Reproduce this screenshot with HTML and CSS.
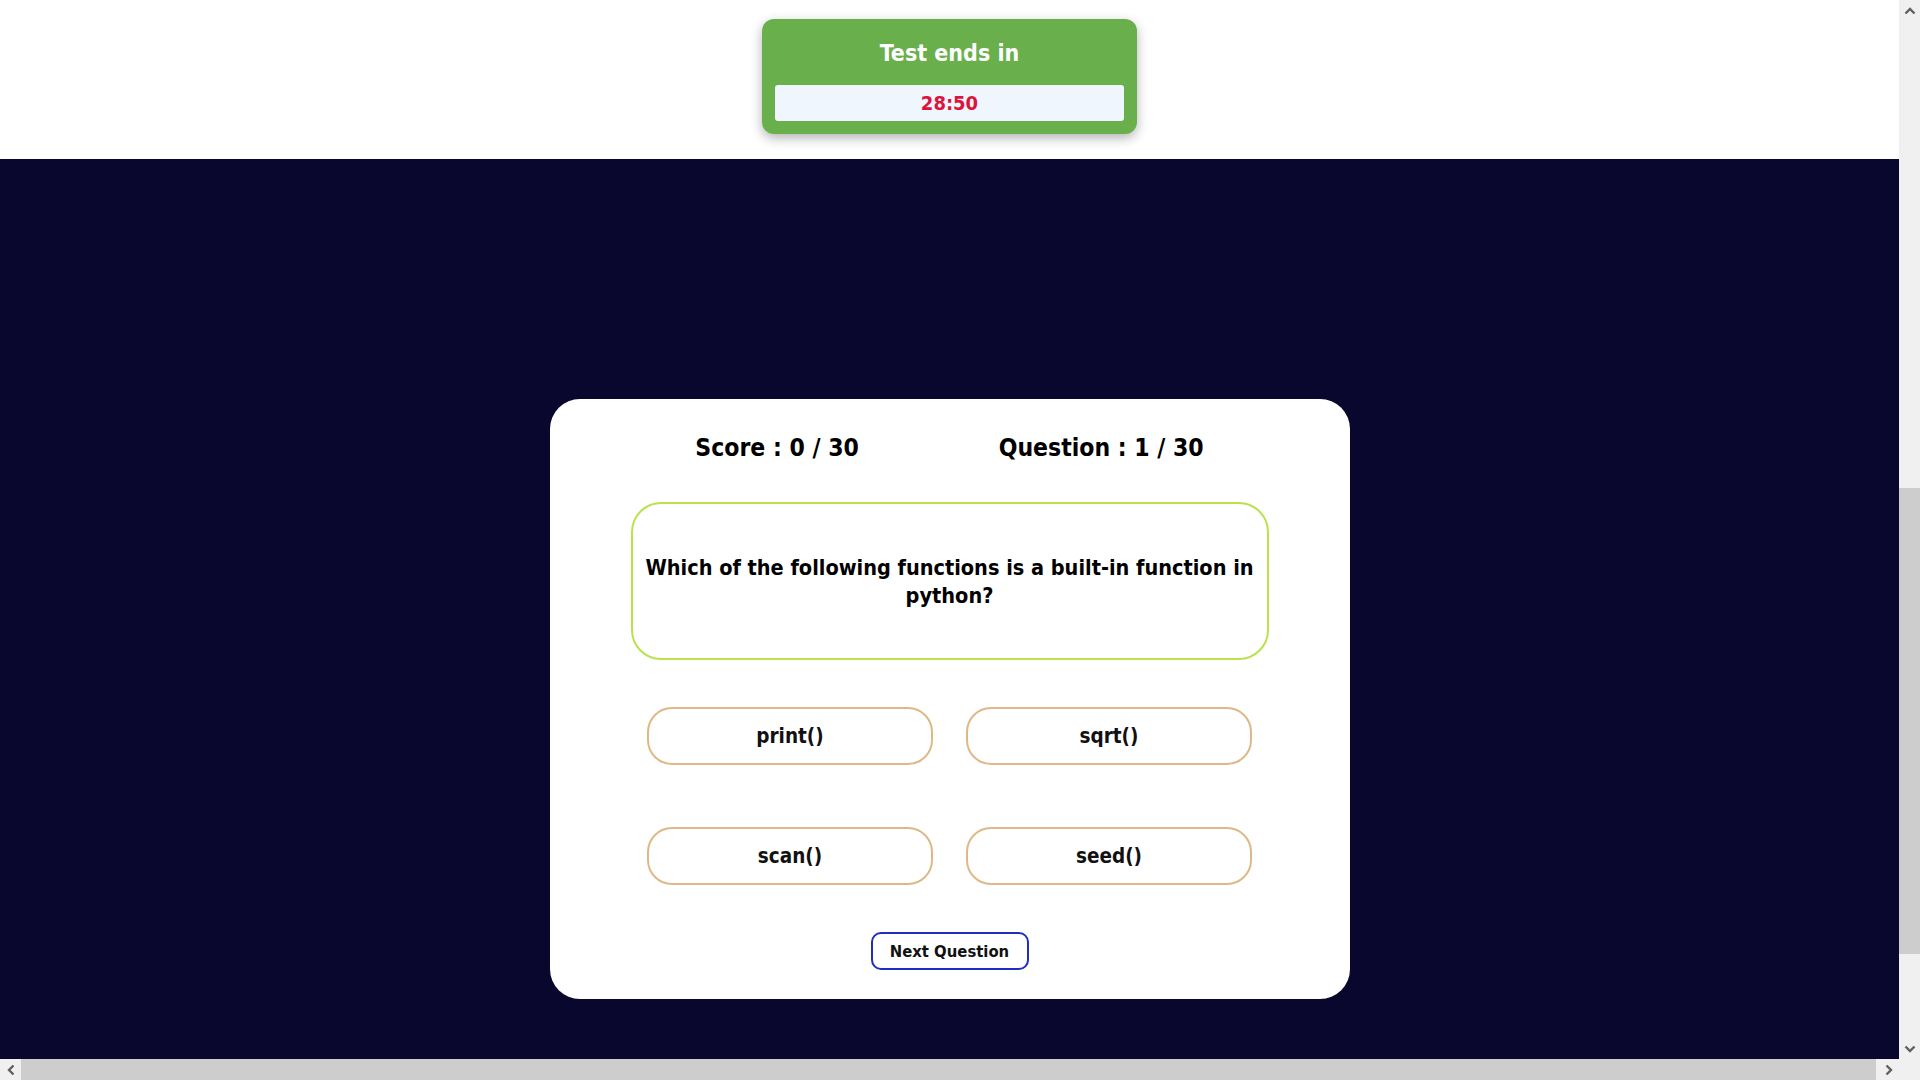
FILE: index.html
```html
<!DOCTYPE html>
<html lang="en">
<head>
<meta charset="utf-8">
<title>Quiz</title>
<link rel="stylesheet" href="styles.css">
</head>
<body>
<div class="page">
  <header class="top">
    <div class="timer">
      <h2 class="timer-title">Test ends in</h2>
      <div class="timer-value">28:50</div>
    </div>
  </header>
  <main class="stage">
    <section class="card">
      <div class="stats">
        <span class="stat">Score : 0 / 30</span>
        <span class="stat">Question : 1 / 30</span>
      </div>
      <div class="question">Which of the following functions is a built-in function in python?</div>
      <div class="options">
        <button class="option">print()</button>
        <button class="option">sqrt()</button>
        <button class="option">scan()</button>
        <button class="option">seed()</button>
      </div>
      <button class="next">Next Question</button>
    </section>
  </main>
</div>
<div class="vbar" aria-hidden="true">
  <span class="sb-btn"><svg width="12" height="8" viewBox="0 0 12 8"><path d="M1.5 6.5 L6 2 L10.5 6.5" fill="none" stroke="#606060" stroke-width="2.4"/></svg></span>
  <div class="vtrack"><div class="vthumb"></div></div>
  <span class="sb-btn"><svg width="12" height="8" viewBox="0 0 12 8"><path d="M1.5 1.5 L6 6 L10.5 1.5" fill="none" stroke="#606060" stroke-width="2.4"/></svg></span>
</div>
<div class="hbar" aria-hidden="true">
  <span class="sb-btn"><svg width="8" height="12" viewBox="0 0 8 12"><path d="M6.5 1.5 L2 6 L6.5 10.5" fill="none" stroke="#606060" stroke-width="2.4"/></svg></span>
  <div class="htrack"><div class="hthumb"></div></div>
  <span class="sb-btn"><svg width="8" height="12" viewBox="0 0 8 12"><path d="M1.5 1.5 L6 6 L1.5 10.5" fill="none" stroke="#606060" stroke-width="2.4"/></svg></span>
</div>
<div class="corner" aria-hidden="true"></div>
</body>
</html>
```

FILE: styles.css
```css
* {
  box-sizing: border-box;
}
html, body {
  margin: 0;
  height: 100%;
  overflow: hidden;
}
body {
  font-family: "DejaVu Sans Condensed", "DejaVu Sans", sans-serif;
  font-weight: bold;
  color: #000;
  background: #09072e;
}
.page {
  width: 1899px;
  height: 1080px;
  display: flex;
  flex-direction: column;
}
.top {
  height: 159px;
  flex: none;
  background: #fff;
  display: flex;
  justify-content: center;
  padding-top: 19px;
}
.timer {
  width: 375px;
  height: 115px;
  background: #69b04d;
  border-radius: 12px;
  box-shadow: 0 4px 12px rgba(0, 0, 0, 0.3);
  padding: 0 13px;
  display: flex;
  flex-direction: column;
}
.timer-title {
  margin: 0;
  height: 66px;
  display: flex;
  align-items: center;
  justify-content: center;
  color: #fff;
  font-size: 23px;
  font-weight: bold;
  padding-top: 2px;
}
.timer-value {
  height: 36px;
  background: #eff6fe;
  border-radius: 3px;
  color: #dc143c;
  font-size: 20px;
  display: flex;
  align-items: center;
  justify-content: center;
}
.stage {
  flex: 1;
  background: #09072e;
  display: flex;
  justify-content: center;
  align-items: flex-start;
  padding-top: 240px;
}
.card {
  width: 800px;
  height: 600px;
  background: #fff;
  border-radius: 30px;
  display: flex;
  flex-direction: column;
  align-items: center;
  padding-top: 30px;
}
.stats {
  width: 100%;
  display: flex;
  justify-content: space-evenly;
  padding: 0 6px;
  height: 36px;
  align-items: center;
}
.stat {
  font-size: 24.5px;
}
.question {
  margin-top: 37px;
  width: 638px;
  height: 158px;
  border: 2px solid #bae24f;
  border-radius: 30px;
  display: flex;
  align-items: center;
  justify-content: center;
  text-align: center;
  font-size: 21.5px;
  line-height: 28px;
  padding: 2px 0 0;
}
.options {
  margin-top: 47px;
  display: grid;
  grid-template-columns: 286px 286px;
  column-gap: 33px;
  row-gap: 62px;
}
.option {
  height: 58px;
  background: #fff;
  border: 2px solid #deb887;
  border-radius: 25px;
  font-family: inherit;
  font-weight: bold;
  font-size: 20.5px;
  color: #111;
  padding: 0;
}
.next {
  margin-top: 47px;
  width: 158px;
  height: 38px;
  background: #fff;
  border: 2px solid #1f2ec0;
  border-radius: 10px;
  font-family: inherit;
  font-weight: bold;
  font-size: 16.5px;
  color: #111;
  padding: 0;
}
.vbar {
  position: fixed;
  top: 0;
  right: 0;
  width: 21px;
  height: 1059px;
  background: #f0f0f0;
  display: flex;
  flex-direction: column;
}
.hbar {
  position: fixed;
  left: 0;
  bottom: 0;
  width: 1899px;
  height: 21px;
  background: #f0f0f0;
  display: flex;
}
.corner {
  position: fixed;
  right: 0;
  bottom: 0;
  width: 21px;
  height: 21px;
  background: #f0f0f0;
}
.sb-btn {
  width: 21px;
  height: 21px;
  flex: none;
  display: flex;
  align-items: center;
  justify-content: center;
}
.vtrack {
  flex: 1;
  padding-top: 467px;
}
.vthumb {
  height: 466px;
  background: #cdcdcd;
}
.htrack {
  flex: 1;
  padding-right: 2px;
}
.hthumb {
  height: 100%;
  background: #cdcdcd;
}
```
